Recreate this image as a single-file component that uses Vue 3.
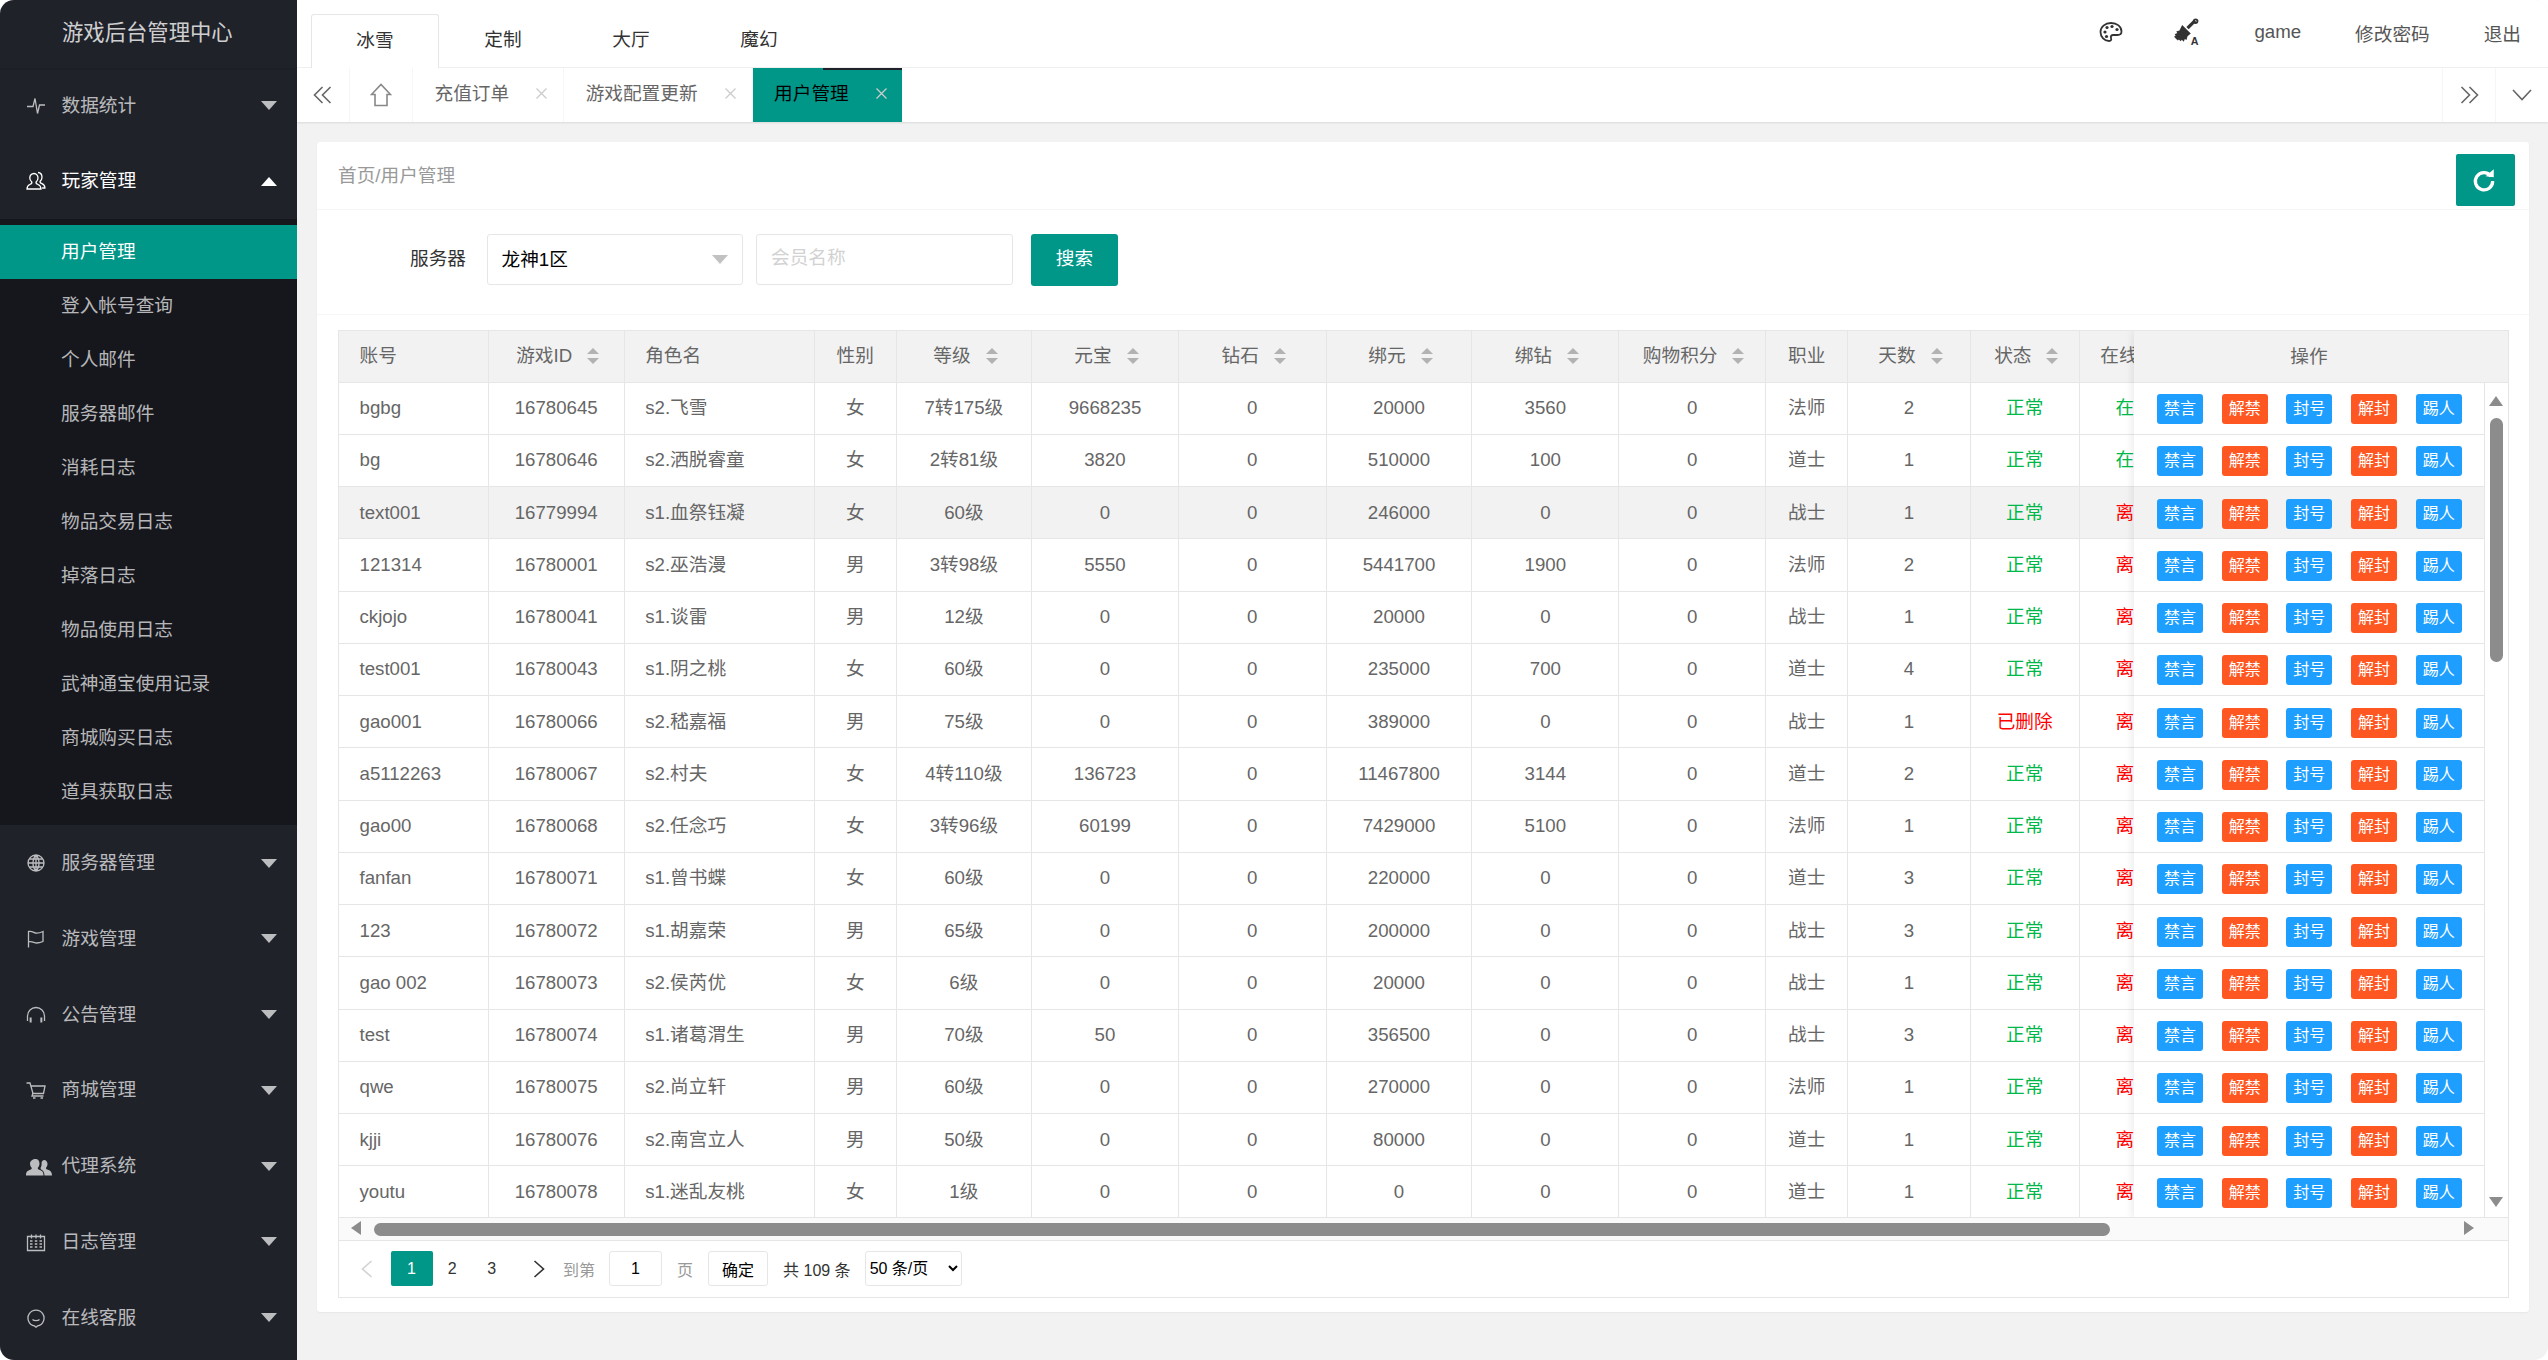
<template>
  <div class="shell">
    <aside class="side">
      <div class="logo">游戏后台管理中心</div>
      <template v-for="item in menus" :key="item.name">
        <div class="nav-item" :class="{ open: item.children }">
          <span class="nav-icon">
            <svg :width="item.icon === 'users' ? 26 : 20" height="20" :viewBox="item.icon === 'users' ? '0 0 26 20' : '0 0 20 20'" :class="{ solid: item.icon === 'users' }">
              <path :d="icons[item.icon]" />
            </svg>
          </span>
          <span class="nav-name">{{ item.name }}</span>
          <span class="caret"></span>
        </div>
        <div v-if="item.children" class="submenu">
          <div
            v-for="(child, i) in item.children"
            :key="child"
            class="sub-item"
            :class="{ active: i === 0 }"
          >{{ child }}</div>
        </div>
      </template>
    </aside>

    <div class="main">
      <header class="topbar">
        <div class="top-tabs">
          <div v-for="(t, i) in topTabs" :key="t" class="top-tab" :class="{ active: i === 0 }">{{ t }}</div>
        </div>
        <div class="top-right">
          <svg class="tool palette" width="24" height="22" viewBox="0 0 24 22">
            <path class="line" d="M12 2C6 2 1.500 6 1.500 11c0 5 4 9 8.500 9 2.200 0 2.600-1.400 2-3-.6-1.700.4-3 2.200-3h4.300c2.600 0 4-1.500 4-3.500C22.500 5.500 18 2 12 2z" />
            <circle cx="6" cy="11" r="1.600" /><circle cx="8" cy="6.500" r="1.600" />
            <circle cx="13" cy="5.500" r="1.600" /><circle cx="18" cy="8.500" r="1.600" /><circle cx="7.500" cy="15.500" r="1.600" />
          </svg>
          <svg class="tool" width="26" height="28" viewBox="0 0 24 26">
            <path d="M7.500 6.500l8 8-3 2.500-1 3.500-1.500-1-1 2.500-1.800-1.800-1 1.500-1.700-1.700-1 1-1.500-1.500-2-2 1.500-1.200L.5 15l2.500-1-1-1.500 3-1z" />
            <path class="line wide" d="M12.500 9.500l7-7" />
            <circle class="line" cx="20" cy="3" r="1.700" />
            <text x="15.500" y="25" class="tool-a">A</text>
          </svg>
          <span>game</span>
          <span>修改密码</span>
          <span>退出</span>
        </div>
      </header>

      <div class="tabbar">
        <div class="tb-cell tb-left">
          <svg width="20" height="18" viewBox="0 0 20 18"><path d="M9.500 1L1.500 9l8 8M17.500 1l-8 8 8 8" /></svg>
        </div>
        <div class="tb-cell tb-home">
          <svg width="22" height="24" viewBox="0 0 22 24"><path d="M1.500 11.500L11 1.500l9.500 10h-3.500v11h-12v-11z" /></svg>
        </div>
        <div v-for="t in pageTabs" :key="t.name" class="page-tab" :class="{ active: t.active }">
          <span>{{ t.name }}</span>
          <svg class="tab-x" width="11" height="11" viewBox="0 0 11 11"><path d="M.5.500l10 10M10.500.500l-10 10" /></svg>
        </div>
        <div class="tb-fill"></div>
        <div class="tb-cell tb-right">
          <svg width="20" height="18" viewBox="0 0 20 18"><path d="M2.500 1l8 8-8 8M10.500 1l8 8-8 8" /></svg>
        </div>
        <div class="tb-cell tb-last">
          <svg width="20" height="12" viewBox="0 0 20 12"><path d="M1 1l9 9.500L19 1" /></svg>
        </div>
      </div>

      <div class="content">
        <section class="card">
          <div class="card-head">
            <span class="crumb">首页/用户管理</span>
            <button class="refresh">
              <svg width="26" height="26" viewBox="0 0 24 24">
                <path class="arc" d="M18.500 8.500A8 8 0 1 0 20 13" />
                <path class="tip" d="M13.500 8.500L21 9.500V2z" />
              </svg>
            </button>
          </div>

          <div class="search">
            <label class="search-label">服务器</label>
            <div class="fake-select">
              <span>龙神1区</span>
              <i class="select-caret"></i>
            </div>
            <input class="search-input" placeholder="会员名称" />
            <button class="search-btn">搜索</button>
          </div>

          <div class="panel">
            <div class="table-wrap">
              <table class="grid">
                <colgroup>
                  <col v-for="c in columns" :key="c.label" :style="{ width: c.width + 'px' }" />
                </colgroup>
                <thead>
                  <tr>
                    <th v-for="c in columns" :key="c.label" :class="c.align">
                      <span class="th-in" :class="{ sortable: c.sort }">
                        {{ c.label }}
                        <i v-if="c.sort" class="sort"></i>
                      </span>
                    </th>
                  </tr>
                </thead>
                <tbody>
                  <tr v-for="(r, idx) in rows" :key="r[1]" :class="{ hover: idx === hoverRow }">
                    <td v-for="(v, i) in r" :key="i" :class="[columns[i].align, cellClass(i, v)]">{{ v }}</td>
                  </tr>
                </tbody>
              </table>

              <!-- 固定操作列 -->
              <div class="fixed-col">
                <div class="fixed-head">操作</div>
                <div class="fixed-body">
                  <div v-for="(r, idx) in rows" :key="r[1]" class="fixed-row" :class="{ hover: idx === hoverRow }">
                    <span v-for="a in actions" :key="a.name" class="act" :class="a.type">{{ a.name }}</span>
                  </div>
                </div>
              </div>

              <div class="vbar">
                <i class="arr arr-up"></i>
                <i class="vthumb"></i>
                <i class="arr arr-down"></i>
              </div>
              <div class="hbar">
                <i class="arr arr-left"></i>
                <i class="hthumb"></i>
                <i class="arr arr-right"></i>
              </div>
            </div>

            <div class="pager">
              <svg class="pg-arrow prev" width="12" height="18" viewBox="0 0 12 18"><path d="M10.500 1l-9 8 9 8" /></svg>
              <span class="pg-num current">1</span>
              <span class="pg-num">2</span>
              <span class="pg-num">3</span>
              <svg class="pg-arrow next" width="12" height="18" viewBox="0 0 12 18"><path d="M1.500 1l9 8-9 8" /></svg>
              <span class="pg-text to">到第</span>
              <input class="pg-input" value="1" />
              <span class="pg-text page">页</span>
              <button class="pg-ok">确定</button>
              <span class="pg-total">共 109 条</span>
              <select class="pg-size"><option>50 条/页</option></select>
            </div>
          </div>
        </section>
      </div>
    </div>
  </div>
</template>

<script setup>
const icons = {
  pulse: 'M1 10.500h6l2-8 2.500 15 2-8.500h5.500',
  user: 'M8 2.500c-2.600 0-4.200 2-4.200 4.400 0 1.700.8 3 2 4 .4 1.300-.3 2-2 2.600-1.600.7-2.800 1.600-2.800 4.500h14c0-2.900-1.300-3.800-3-4.500-1.600-.6-2.300-1.300-1.900-2.600 1.200-1 1.900-2.300 1.900-4 0-2.400-1.500-4.400-4-4.400zM12 1.500c2.400.2 4 2.300 4 4.700 0 1.700-.7 3-1.900 4-.3 1.200.2 1.900 1.800 2.500 1.700.7 3 1.700 3 4.300h-2.800',
  globe: 'M10 2a8 8 0 1 0 0 16a8 8 0 0 0 0-16zM2 10h16M3 6h14M3 14h14M10 2v16M10 2c-4 4-4 12 0 16M10 2c4 4 4 12 0 16',
  flag: 'M2.500 18.500V2.500c4-.8 5.500 1.600 8 1.600 2 0 4-.5 6.500-1.600v10c-2.500 1-4.500 1.500-6.500 1.500-2.500 0-4-2-8-1.200',
  headset: 'M1.500 16v-5a8.500 8.500 0 0 1 17 0v5M5 12.500v5M15 12.500v5M4.300 12.500v5M15.700 12.500v5',
  cart: 'M.5 3h3.500l3 10.500h10.500l1.500-7.500H5M6.800 13.500l-.8 2.500h11.500M7 18h2.500M14.500 18h2.500',
  users: 'M9.500 3c2.500 0 4 2 4 4.500 0 1.700-.7 3.300-1.700 4.200-.3 1 .3 1.700 2 2.300 2 .8 3.700 1.600 3.700 5.500H0c0-3.900 1.700-4.700 3.700-5.500 1.700-.6 2.300-1.300 2-2.300-1-.9-1.700-2.500-1.700-4.200C4 5 7 3 9.500 3zM18 4c2.200 0 3.500 1.800 3.500 4 0 1.500-.6 2.900-1.500 3.700-.2.900.3 1.500 1.800 2 1.800.7 4.200 1.400 4.200 5.800h-7.500c0-3-1.300-5-3-5.800-1.100-.5-1.100-1.500-.6-2.700.6-1 .9-2.500.6-4.300C16 5 17 4 18 4z',
  calendar: 'M1.500 4.500h17v14h-17zM5.500 2.500v4M10 2.500v4M14.500 2.500v4M4 9h2.500M8.800 9h2.500M13.500 9h2.500M4 12h2.500M8.800 12h2.500M13.500 12h2.500M4 15h2.500M8.800 15h2.500M13.500 15h2.500',
  chat: 'M8.500 17.900A8 8 0 1 1 11.500 17.900L10 19.200zM6.500 11.500c1.500 1.500 5.500 1.500 7 0'
}

const menus = [
  { name: '数据统计', icon: 'pulse' },
  {
    name: '玩家管理',
    icon: 'user',
    children: ['用户管理', '登入帐号查询', '个人邮件', '服务器邮件', '消耗日志', '物品交易日志', '掉落日志', '物品使用日志', '武神通宝使用记录', '商城购买日志', '道具获取日志']
  },
  { name: '服务器管理', icon: 'globe' },
  { name: '游戏管理', icon: 'flag' },
  { name: '公告管理', icon: 'headset' },
  { name: '商城管理', icon: 'cart' },
  { name: '代理系统', icon: 'users' },
  { name: '日志管理', icon: 'calendar' },
  { name: '在线客服', icon: 'chat' }
]

const topTabs = ['冰雪', '定制', '大厅', '魔幻']

const pageTabs = [
  { name: '充值订单' },
  { name: '游戏配置更新' },
  { name: '用户管理', active: true }
]

const columns = [
  { label: '账号', width: 149.6, align: 'left' },
  { label: '游戏ID', width: 136.1, align: 'center', sort: true },
  { label: '角色名', width: 190, align: 'left' },
  { label: '性别', width: 82.1, align: 'center' },
  { label: '等级', width: 135.2, align: 'center', sort: true },
  { label: '元宝', width: 147, align: 'center', sort: true },
  { label: '钻石', width: 147.6, align: 'center', sort: true },
  { label: '绑元', width: 145.8, align: 'center', sort: true },
  { label: '绑钻', width: 147, align: 'center', sort: true },
  { label: '购物积分', width: 146.6, align: 'center', sort: true },
  { label: '职业', width: 82.4, align: 'center' },
  { label: '天数', width: 122.3, align: 'center', sort: true },
  { label: '状态', width: 109.1, align: 'center', sort: true },
  { label: '在线状态', width: 110, align: 'left' }
]

const rows = [
  ['bgbg', '16780645', 's2.飞雪', '女', '7转175级', '9668235', '0', '20000', '3560', '0', '法师', '2', '正常', '在线'],
  ['bg', '16780646', 's2.洒脱睿童', '女', '2转81级', '3820', '0', '510000', '100', '0', '道士', '1', '正常', '在线'],
  ['text001', '16779994', 's1.血祭钰凝', '女', '60级', '0', '0', '246000', '0', '0', '战士', '1', '正常', '离线'],
  ['121314', '16780001', 's2.巫浩漫', '男', '3转98级', '5550', '0', '5441700', '1900', '0', '法师', '2', '正常', '离线'],
  ['ckjojo', '16780041', 's1.谈雷', '男', '12级', '0', '0', '20000', '0', '0', '战士', '1', '正常', '离线'],
  ['test001', '16780043', 's1.阴之桃', '女', '60级', '0', '0', '235000', '700', '0', '道士', '4', '正常', '离线'],
  ['gao001', '16780066', 's2.嵇嘉福', '男', '75级', '0', '0', '389000', '0', '0', '战士', '1', '已删除', '离线'],
  ['a5112263', '16780067', 's2.村夫', '女', '4转110级', '136723', '0', '11467800', '3144', '0', '道士', '2', '正常', '离线'],
  ['gao00', '16780068', 's2.任念巧', '女', '3转96级', '60199', '0', '7429000', '5100', '0', '法师', '1', '正常', '离线'],
  ['fanfan', '16780071', 's1.曾书蝶', '女', '60级', '0', '0', '220000', '0', '0', '道士', '3', '正常', '离线'],
  ['123', '16780072', 's1.胡嘉荣', '男', '65级', '0', '0', '200000', '0', '0', '战士', '3', '正常', '离线'],
  ['gao 002', '16780073', 's2.侯芮优', '女', '6级', '0', '0', '20000', '0', '0', '战士', '1', '正常', '离线'],
  ['test', '16780074', 's1.诸葛渭生', '男', '70级', '50', '0', '356500', '0', '0', '战士', '3', '正常', '离线'],
  ['qwe', '16780075', 's2.尚立轩', '男', '60级', '0', '0', '270000', '0', '0', '法师', '1', '正常', '离线'],
  ['kjji', '16780076', 's2.南宫立人', '男', '50级', '0', '0', '80000', '0', '0', '道士', '1', '正常', '离线'],
  ['youtu', '16780078', 's1.迷乱友桃', '女', '1级', '0', '0', '0', '0', '0', '道士', '1', '正常', '离线']
]

const actions = [
  { name: '禁言', type: 'blue' },
  { name: '解禁', type: 'orange' },
  { name: '封号', type: 'blue' },
  { name: '解封', type: 'orange' },
  { name: '踢人', type: 'blue' }
]

const hoverRow = 2

const cellClass = (i, v) => {
  if (i === 12) return v === '正常' ? 'ok' : 'bad'
  if (i === 13) return v === '在线' ? 'ok online-cell' : 'bad online-cell'
  return ''
}
</script>

<style scoped>
.shell {
  display: flex;
  width: 2548px;
  height: 1360px;
  border-radius: 14px;
  overflow: hidden;
  background: #f2f2f2;
  font-family: "Liberation Sans", "Noto Sans CJK SC", sans-serif;
  font-size: 18.67px;
  color: #666;
}

/* 左侧菜单 */
.side {
  flex: none;
  width: 297px;
  background: #20222a;
  color: rgba(255, 255, 255, 0.7);
}

.logo {
  height: 67.800px;
  line-height: 66px;
  padding-left: 62px;
  font-size: 21.33px;
  color: rgba(255, 255, 255, 0.8);
  box-shadow: 0 1px 2px rgba(0, 0, 0, 0.15);
}

.nav-item {
  display: flex;
  align-items: center;
  height: 75.75px;
  line-height: 28px;
  padding-left: 26px;
}

.nav-item.open {
  color: #fff;
}

.nav-icon {
  flex: none;
  display: flex;
  width: 20px;
  margin-right: 15.5px;
}

.nav-icon svg {
  flex: none;
  fill: none;
  stroke: currentColor;
  stroke-width: 1.3;
}

.nav-icon svg.solid {
  fill: currentColor;
  stroke: none;
}

.nav-name {
  flex: 1;
}

.caret {
  width: 0;
  height: 0;
  margin-right: 20px;
  border-left: 8px solid transparent;
  border-right: 8px solid transparent;
  border-top: 9px solid rgba(255, 255, 255, 0.7);
}

.nav-item.open .caret {
  border-top: 0;
  border-bottom: 9px solid #fff;
}

.submenu {
  padding: 6px 0;
  background: #16171d;
}

.sub-item {
  height: 54px;
  line-height: 54px;
  padding-left: 61px;
}

.sub-item.active {
  background: #009688;
  color: #fff;
}

.main {
  flex: 1;
  display: flex;
  flex-direction: column;
  min-width: 0;
}

/* 顶部栏 */
.topbar {
  flex: none;
  display: flex;
  justify-content: space-between;
  height: 68px;
  padding: 14px 27px 0 14px;
  box-sizing: border-box;
  background: #fff;
  border-bottom: 1px solid #f0f0f0;
}

.top-tabs {
  display: flex;
}

.top-tab {
  width: 128px;
  height: 54px;
  line-height: 52px;
  box-sizing: border-box;
  text-align: center;
  color: #333;
}

.top-tab.active {
  height: 55px;
  background: #fff;
  border: 1px solid #e6e6e6;
  border-bottom: 0;
  border-radius: 3px 3px 0 0;
}

.top-right {
  display: flex;
  align-items: center;
  gap: 54px;
  height: 36px;
  color: #555;
}

.tool {
  fill: #333;
}

.tool.palette {
  margin-right: -3px;
}

.tool .line {
  fill: none;
  stroke: #333;
  stroke-width: 1.8;
}

.tool .wide {
  stroke-width: 3;
}

.tool-a {
  font-size: 10px;
  font-weight: 700;
  fill: #333;
}

/* 标签栏 */
.tabbar {
  flex: none;
  position: relative;
  display: flex;
  height: 54px;
  background: #fff;
  line-height: 26px;
  box-shadow: 0 1px 2px rgba(0, 0, 0, 0.1);
}

.tb-cell {
  flex: none;
  display: flex;
  align-items: center;
  justify-content: center;
  box-sizing: border-box;
  border-right: 1px solid #f6f6f6;
}

.tb-cell svg {
  fill: none;
  stroke: #666;
  stroke-width: 1.6;
}

.tb-left {
  width: 53px;
}

.tb-home {
  width: 63px;
}

.tb-home svg {
  stroke: #888;
}

.tb-fill {
  flex: 1;
}

.tb-right {
  width: 53.5px;
  border-left: 1px solid #f6f6f6;
}

.tb-last {
  width: 52.5px;
  border-right: 0;
}

.page-tab {
  flex: none;
  display: flex;
  align-items: center;
  box-sizing: border-box;
  padding: 0 16px 3px 21.5px;
  gap: 27px;
  border-right: 1px solid #f6f6f6;
}

.tab-x {
  fill: none;
  stroke: #ccc;
  stroke-width: 1.3;
}

.page-tab.active {
  position: relative;
  padding-right: 15px;
  border-right: 0;
  background: #009688;
  color: #000;
}

.page-tab.active::after {
  content: "";
  position: absolute;
  top: 0;
  right: 0;
  width: 79px;
  height: 2px;
  background: #20222a;
}

/* 内容区 */
.content {
  flex: 1;
  padding: 20px 19px 0 20px;
  min-height: 0;
}

.card {
  height: 1170px;
  background: #fff;
  border-radius: 3px;
  box-shadow: 0 1px 2px rgba(0, 0, 0, 0.05);
}

.card-head {
  display: flex;
  justify-content: space-between;
  height: 68px;
  padding: 0 14px 0 21px;
  border-bottom: 1px solid #f6f6f6;
  box-sizing: border-box;
}

.crumb {
  line-height: 68px;
  color: #999;
}

.refresh {
  width: 59px;
  height: 52px;
  margin-top: 12px;
  padding: 3px 4px 0 0;
  border: 0;
  border-radius: 2px;
  background: #009688;
}

.refresh .arc {
  fill: none;
  stroke: #fff;
  stroke-width: 3;
}

.refresh .tip {
  fill: #fff;
}

.search {
  display: flex;
  align-items: flex-start;
  height: 105px;
  padding: 24px 0 0 93px;
  box-sizing: border-box;
  border-bottom: 1px solid #f6f6f6;
  line-height: 26px;
}

.search-label {
  width: 76.5px;
  line-height: 50px;
  color: #333;
}

.fake-select {
  display: flex;
  align-items: center;
  justify-content: space-between;
  width: 256.5px;
  height: 51px;
  padding: 0 13px 0 14px;
  box-sizing: border-box;
  border: 1px solid #e6e6e6;
  border-radius: 3px;
  color: #000;
}

.select-caret {
  width: 0;
  height: 0;
  margin-right: 1px;
  border-left: 8px solid transparent;
  border-right: 8px solid transparent;
  border-top: 9px solid #c2c2c2;
}

.search-input {
  width: 256.5px;
  height: 51px;
  margin-left: 13px;
  padding: 0 14px 3px;
  box-sizing: border-box;
  border: 1px solid #e6e6e6;
  border-radius: 3px;
  outline: none;
  font: inherit;
}

.search-input::placeholder {
  color: #d2d2d2;
}

.search-btn {
  width: 87px;
  height: 52px;
  margin-left: 18.5px;
  padding-bottom: 3px;
  border: 0;
  border-radius: 3px;
  background: #009688;
  color: #fff;
  font: inherit;
}

.panel {
  margin: 14.500px 20.500px 0 21px;
}

/* 表格 */
.table-wrap {
  position: relative;
  height: 911.500px;
  box-sizing: border-box;
  border: 1px solid #e6e6e6;
  overflow: hidden;
}

.grid {
  table-layout: fixed;
  width: 1850.800px;
  border-collapse: separate;
  border-spacing: 0;
}

.grid th,
.grid td {
  box-sizing: border-box;
  padding: 0 20.500px;
  overflow: hidden;
  white-space: nowrap;
  font-weight: 400;
  line-height: 26px;
  border-right: 1px solid #e6e6e6;
  border-bottom: 1px solid #e6e6e6;
}

.grid th {
  height: 52px;
  background: #f2f2f2;
}

.grid td {
  height: 52.250px;
}

.left {
  text-align: left;
}

.center {
  text-align: center;
}

.grid tr.hover td {
  background: #f2f2f2;
}

.th-in {
  display: inline-flex;
  align-items: center;
}

.th-in.sortable {
  margin-left: 3px;
}

.sort {
  position: relative;
  width: 12px;
  height: 16px;
  margin-left: 15px;
}

.sort::before,
.sort::after {
  content: "";
  position: absolute;
  left: 0;
  border-left: 6px solid transparent;
  border-right: 6px solid transparent;
}

.sort::before {
  top: 0;
  border-bottom: 6px solid #b2b2b2;
}

.sort::after {
  bottom: 0;
  border-top: 6px solid #b2b2b2;
}

.ok {
  color: #00b84a;
}

.bad {
  color: #f00;
}

.online-cell {
  text-align: center;
}

/* 右侧固定列 */
.fixed-col {
  position: absolute;
  top: 0;
  right: 0;
  width: 374px;
  box-shadow: -2px 0 8px rgba(0, 0, 0, 0.08);
}

.fixed-head {
  height: 52px;
  line-height: 51px;
  box-sizing: border-box;
  text-align: center;
  background: #f2f2f2;
  border-bottom: 1px solid #e6e6e6;
  padding-right: 23px;
}

.fixed-body {
  width: 351px;
  background: #fff;
}

.fixed-row {
  display: flex;
  align-items: center;
  gap: 18.700px;
  height: 52.250px;
  padding: 2px 0 0 23.500px;
  box-sizing: border-box;
  border-right: 1px solid #e6e6e6;
  border-bottom: 1px solid #e6e6e6;
}

.fixed-row.hover {
  background: #f2f2f2;
}

.act {
  flex: none;
  width: 46px;
  height: 30px;
  line-height: 30px;
  border-radius: 3px;
  text-align: center;
  font-size: 16px;
  color: #fff;
}

.blue {
  background: #1e9fff;
}

.orange {
  background: #ff5722;
}

/* 滚动条 */
.vbar {
  position: absolute;
  top: 52px;
  right: 0;
  bottom: 23px;
  width: 23px;
  background: #fff;
}

.hbar {
  position: absolute;
  left: 0;
  right: 0;
  bottom: 0;
  height: 22px;
  background: #fafafa;
  border-top: 1px solid #e6e6e6;
}

.arr {
  position: absolute;
  width: 0;
  height: 0;
}

.arr-up {
  top: 13px;
  left: 4px;
  border-left: 7.500px solid transparent;
  border-right: 7.500px solid transparent;
  border-bottom: 10px solid #8c8c8c;
}

.arr-down {
  bottom: 10px;
  left: 4px;
  border-left: 7.500px solid transparent;
  border-right: 7.500px solid transparent;
  border-top: 10px solid #8c8c8c;
}

.arr-left {
  top: 3px;
  left: 12px;
  border-top: 7.500px solid transparent;
  border-bottom: 7.500px solid transparent;
  border-right: 10px solid #8c8c8c;
}

.arr-right {
  top: 3px;
  right: 34px;
  border-top: 7.500px solid transparent;
  border-bottom: 7.500px solid transparent;
  border-left: 10px solid #8c8c8c;
}

.vthumb {
  position: absolute;
  top: 35px;
  left: 5px;
  width: 13px;
  height: 244px;
  border-radius: 7px;
  background: #8c8c8c;
}

.hthumb {
  position: absolute;
  top: 5px;
  left: 35px;
  width: 1736px;
  height: 13px;
  border-radius: 7px;
  background: #8c8c8c;
}

/* 分页 */
.pager {
  display: flex;
  align-items: center;
  height: 57px;
  box-sizing: border-box;
  padding: 0 0 1px 21.500px;
  border: 1px solid #e6e6e6;
  border-top: 0;
  font-size: 16px;
  color: #333;
}

.pg-arrow {
  flex: none;
  fill: none;
  stroke-width: 1.600;
}

.pg-arrow.prev {
  stroke: #d2d2d2;
  margin-right: 18px;
}

.pg-arrow.next {
  stroke: #333;
  margin-left: 21px;
}

.pg-num {
  width: 39.500px;
  height: 35px;
  line-height: 35px;
  text-align: center;
}

.pg-num.current {
  width: 42px;
  border-radius: 2px;
  background: #009688;
  color: #fff;
}

.pg-text {
  color: #999;
}

.pg-text.to {
  margin-left: 18.500px;
}

.pg-text.page {
  margin-left: 15px;
}

.pg-input {
  width: 53px;
  height: 35px;
  margin-left: 14px;
  padding: 0;
  box-sizing: border-box;
  border: 1px solid #e6e6e6;
  border-radius: 3px;
  outline: none;
  text-align: center;
  font: inherit;
  color: #000;
}

.pg-ok {
  width: 60px;
  height: 35px;
  margin-left: 15px;
  padding: 0;
  border: 1px solid #e6e6e6;
  border-radius: 3px;
  background: #fff;
  font: inherit;
  color: #000;
}

.pg-total {
  margin-left: 15px;
  color: #333;
}

.pg-size {
  width: 97px;
  height: 35px;
  margin-left: 14px;
  border: 1px solid #e6e6e6;
  border-radius: 3px;
  background: #fff;
  font: inherit;
  color: #000;
}
</style>

<style>
body {
  background: #fff;
}
</style>
